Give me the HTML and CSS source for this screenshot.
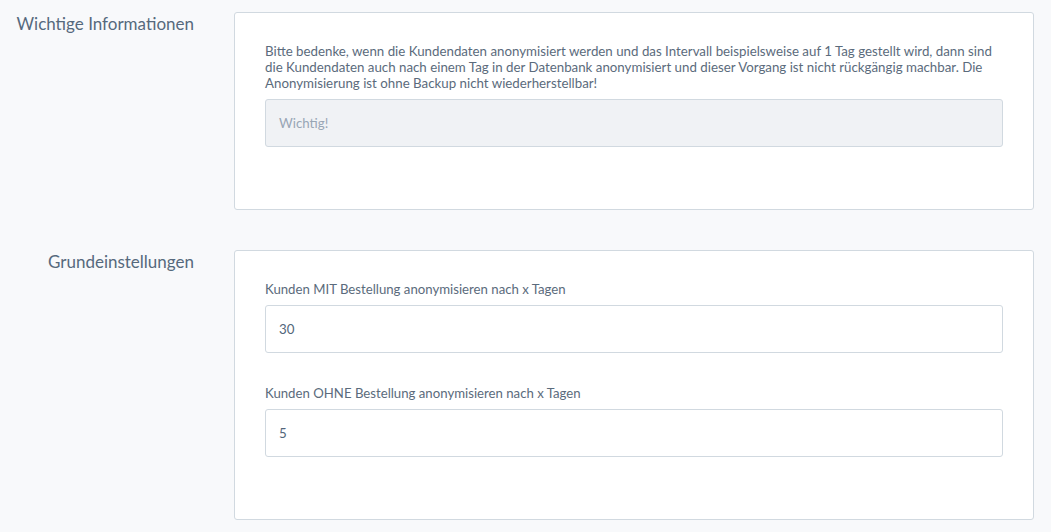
FILE: index.html
```html
<!DOCTYPE html>
<html lang="de">
<head>
<meta charset="utf-8">
<link rel="stylesheet" href="styles.css">
</head>
<body>
<div class="page">
  <section class="row">
    <h2 class="row-label">Wichtige Informationen</h2>
    <div class="card">
      <p class="info">Bitte bedenke, wenn die Kundendaten anonymisiert werden und das Intervall beispielsweise auf 1 Tag gestellt wird, dann sind die Kundendaten auch nach einem Tag in der Datenbank anonymisiert und dieser Vorgang ist nicht rückgängig machbar. Die Anonymisierung ist ohne Backup nicht wiederherstellbar!</p>
      <div class="field">
        <div class="input disabled">Wichtig!</div>
      </div>
    </div>
  </section>
  <section class="row">
    <h2 class="row-label">Grundeinstellungen</h2>
    <div class="card">
      <div class="field">
        <label class="field-label">Kunden MIT Bestellung anonymisieren nach x Tagen</label>
        <div class="input">30</div>
      </div>
      <div class="field">
        <label class="field-label">Kunden OHNE Bestellung anonymisieren nach x Tagen</label>
        <div class="input">5</div>
      </div>
    </div>
  </section>
</div>
</body>
</html>
```
FILE: styles.css
```css
html, body {
  margin: 0;
  padding: 0;
  background: #f8f9fb;
}
body {
  font-family: Lato, "Noto Sans", sans-serif;
  color: #5b6b7c;
}
.page {
  padding: 12px 17px 0 0;
}
.row {
  display: flex;
  align-items: flex-start;
  margin-bottom: 40px;
}
.row:last-child {
  margin-bottom: 12px;
}
.row-label {
  width: 194px;
  flex: none;
  margin: 0;
  padding: 0;
  box-sizing: border-box;
  text-align: right;
  font-size: 17px;
  font-weight: 400;
  line-height: 24px;
  color: #56697d;
}
.card {
  flex: 1;
  margin-left: 40px;
  background: #fff;
  border: 1px solid #d1d9e0;
  border-radius: 3px;
  padding: 30px 30px 30px;
}
.info {
  margin: 0 0 8px;
  font-size: 13.3px;
  line-height: 16px;
}
.field {
  margin-bottom: 32px;
}
.field-label {
  display: block;
  font-size: 13.2px;
  line-height: 16px;
  margin-bottom: 8px;
}
.input {
  height: 46px;
  border: 1px solid #d1d9e0;
  border-radius: 3px;
  background: #fff;
  padding: 0 13px;
  display: flex;
  align-items: center;
  font-size: 13.3px;
  color: #52667a;
}
.input.disabled {
  background: #f0f2f5;
  color: #98a6b5;
}
```
